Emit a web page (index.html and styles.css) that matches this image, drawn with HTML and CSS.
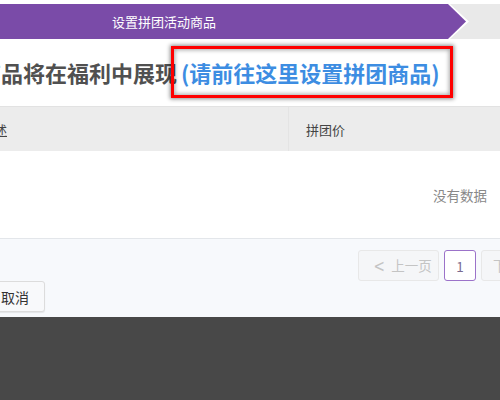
FILE: index.html
```html
<!DOCTYPE html>
<html lang="zh-CN">
<head>
<meta charset="utf-8">
<link rel="stylesheet" href="styles.css">
</head>
<body>
<div class="page">
  <div class="steps">
    <div class="step-outline">
      <div class="step-active">设置拼团活动商品</div>
    </div>
  </div>

  <h2 class="heading">商品将在福利中展现 <span class="link">(请前往这里设置拼团商品)</span></h2>

  <div class="table">
    <div class="thead">
      <div class="th th-desc"><span class="sort">描述</span></div>
      <div class="th th-price">拼团价</div>
    </div>
    <div class="tbody">
      <span class="empty">没有数据</span>
    </div>
  </div>

  <div class="footer">
    <div class="pager">
      <button class="pg pg-prev"><span class="chev">&lt;</span>上一页</button>
      <button class="pg pg-cur">1</button>
      <button class="pg pg-next">下一页<span class="chev">&gt;</span></button>
    </div>
    <div class="actions">
      <button class="btn-cancel">取消</button>
    </div>
  </div>

  <div class="dark"></div>
</div>
</body>
</html>
```

FILE: styles.css
```css
* { box-sizing: border-box; }
html, body { margin: 0; padding: 0; }
body {
  width: 500px;
  height: 400px;
  overflow: hidden;
  background: #ffffff;
  font-family: "Noto Sans CJK SC", "Noto Sans", sans-serif;
}
.page {
  width: 500px;
  height: 400px;
  overflow: hidden;
  display: flex;
  flex-direction: column;
}

/* step bar */
.steps {
  margin-top: 4px;
  height: 35px;
  background: #e9e9e9;
  display: flex;
}
.step-outline {
  width: 469px;
  height: 35px;
  background: #ffffff;
  clip-path: polygon(0 0, 450px 0, 469px 17.5px, 450px 35px, 0 35px);
}
.step-active {
  width: 466px;
  height: 35px;
  background: #7a4ba8;
  clip-path: polygon(0 0, 448px 0, 466px 17.5px, 448px 35px, 0 35px);
  color: #ffffff;
  font-size: 13px;
  line-height: 35px;
  padding-left: 112px;
  white-space: nowrap;
}

/* heading */
.heading {
  margin: 18px 0 0 -21px;
  height: 30px;
  line-height: 30px;
  font-size: 22px;
  font-weight: bold;
  color: #505050;
  white-space: nowrap;
}
.link {
  position: relative;
  color: #3d8de2;
  display: inline-block;
  margin-left: -1px;
}
.link::after {
  content: "";
  position: absolute;
  left: -10px;
  right: -13px;
  top: -11px;
  bottom: -11px;
  border: 3px solid #ff0000;
  box-shadow: 0 0 4px 1px rgba(0, 0, 0, 0.45), inset 0 0 4px 1px rgba(0, 0, 0, 0.35);
}

/* table */
.table {
  margin-top: 19px;
}
.thead {
  display: flex;
  height: 45px;
  background: #ececec;
  border-top: 1px solid #e2e2e2;
  font-size: 13px;
  color: #444444;
}
.th {
  display: flex;
  align-items: center;
}
.th-desc {
  width: 308px;
  border-right: 1px solid #e4e4e4;
  margin-left: -19px;
}
.sort {
  text-decoration: underline;
}
.th-price {
  flex: 1;
  padding-left: 17px;
}
.tbody {
  height: 87px;
  display: flex;
  align-items: center;
  justify-content: flex-end;
  padding-right: 13px;
}
.empty {
  font-size: 13.5px;
  color: #888888;
}

/* footer */
.footer {
  background: #f7f9fc;
  border-top: 1px solid #e3e6ea;
  height: 79px;
  padding-top: 11px;
  display: flex;
  flex-direction: column;
}
.pager {
  display: flex;
  gap: 5px;
  margin-left: 358px;
  height: 31px;
  white-space: nowrap;
}
.pg {
  font-family: inherit;
  font-size: 13.5px;
  height: 31px;
  border-radius: 3px;
  padding: 0;
  flex-shrink: 0;
}
.pg-prev, .pg-next {
  width: 81px;
  background: #f5f6f8;
  border: 1px solid #e8e8e8;
  color: #c4c4c4;
}
.pg-prev {
  text-align: left;
  padding-left: 13px;
}
.pg-next {
  text-align: left;
  padding-left: 11px;
}
.chev {
  font-family: "DejaVu Sans", sans-serif;
  font-size: 17px;
  transform: scaleX(0.8);
  display: inline-block;
  margin-right: 5px;
  vertical-align: -1px;
}
.pg-next .chev {
  margin-right: 0;
  margin-left: 5px;
}
.pg-cur {
  width: 32px;
  background: #ffffff;
  border: 1px solid #9b72c9;
  color: #7a6a90;
}
.actions {
  display: flex;
}
.btn-cancel {
  margin-left: -14px;
  width: 59px;
  height: 31px;
  padding: 0 0 0 14px;
  text-align: left;
  font-family: inherit;
  font-size: 14px;
  color: #333333;
  background: #f8f9fb;
  border: 1px solid #dcdcdc;
  border-radius: 3px;
  box-shadow: 0 1px 1px rgba(0, 0, 0, 0.08);
}

.dark {
  flex: 1;
  background: #484848;
}
```
